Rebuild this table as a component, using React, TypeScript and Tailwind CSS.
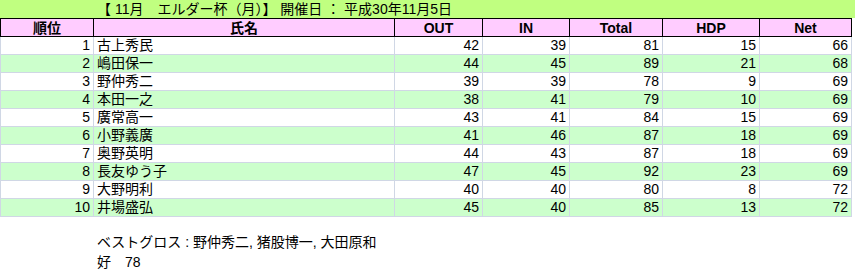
import React from 'react';

interface Row {
  rank: number;
  name: string;
  out: number;
  inn: number;
  total: number;
  hdp: number;
  net: number;
}

const rows: Row[] = [
  { rank: 1, name: '古上秀民', out: 42, inn: 39, total: 81, hdp: 15, net: 66 },
  { rank: 2, name: '嶋田保一', out: 44, inn: 45, total: 89, hdp: 21, net: 68 },
  { rank: 3, name: '野仲秀二', out: 39, inn: 39, total: 78, hdp: 9, net: 69 },
  { rank: 4, name: '本田一之', out: 38, inn: 41, total: 79, hdp: 10, net: 69 },
  { rank: 5, name: '廣常高一', out: 43, inn: 41, total: 84, hdp: 15, net: 69 },
  { rank: 6, name: '小野義廣', out: 41, inn: 46, total: 87, hdp: 18, net: 69 },
  { rank: 7, name: '奥野英明', out: 44, inn: 43, total: 87, hdp: 18, net: 69 },
  { rank: 8, name: '長友ゆう子', out: 47, inn: 45, total: 92, hdp: 23, net: 69 },
  { rank: 9, name: '大野明利', out: 40, inn: 40, total: 80, hdp: 8, net: 72 },
  { rank: 10, name: '井場盛弘', out: 45, inn: 40, total: 85, hdp: 13, net: 72 },
];

const headers = ['順位', '氏名', 'OUT', 'IN', 'Total', 'HDP', 'Net'];
const widths = ['w-[93px]', 'w-[301px]', 'w-[88px]', 'w-[87px]', 'w-[93px]', 'w-[97px]', 'w-[92px]'];

const App: React.FC = () => {
  return (
    <div
      className="w-[855px] h-[271px] bg-white text-black text-[14px] overflow-hidden"
      style={{ fontFamily: '"Liberation Sans", "Noto Sans CJK JP", sans-serif' }}
    >
      <div className="h-[18px] bg-[#c0ff80] pl-[97px] leading-[18px] whitespace-pre">
        【 11月　エルダー杯（月）】 開催日 ： 平成30年11月5日
      </div>
      <table className="border-collapse table-fixed w-[852px]">
        <thead>
          <tr className="bg-[#ffccff]">
            {headers.map((h, i) => (
              <th
                key={h}
                className={`${widths[i]} h-[18px] p-0 border border-black font-bold text-center leading-[16px]`}
              >
                {h}
              </th>
            ))}
          </tr>
        </thead>
        <tbody>
          {rows.map((r) => {
            const bg = r.rank % 2 === 0 ? 'bg-[#ccffcc]' : 'bg-white';
            const cell = 'h-[18px] p-0 px-[3px] border border-[#d0d7e5] leading-[17px]';
            return (
              <tr key={r.rank} className={bg}>
                <td className={`${cell} text-right`}>{r.rank}</td>
                <td className={`${cell} text-left`}>{r.name}</td>
                <td className={`${cell} text-right`}>{r.out}</td>
                <td className={`${cell} text-right`}>{r.inn}</td>
                <td className={`${cell} text-right`}>{r.total}</td>
                <td className={`${cell} text-right`}>{r.hdp}</td>
                <td className={`${cell} text-right`}>{r.net}</td>
              </tr>
            );
          })}
        </tbody>
      </table>
      <div className="pl-[97px] pt-[15px] leading-[20px] whitespace-pre">
        ベストグロス : 野仲秀二, 猪股博一, 大田原和
        <br />
        好　78
      </div>
    </div>
  );
};

export default App;
